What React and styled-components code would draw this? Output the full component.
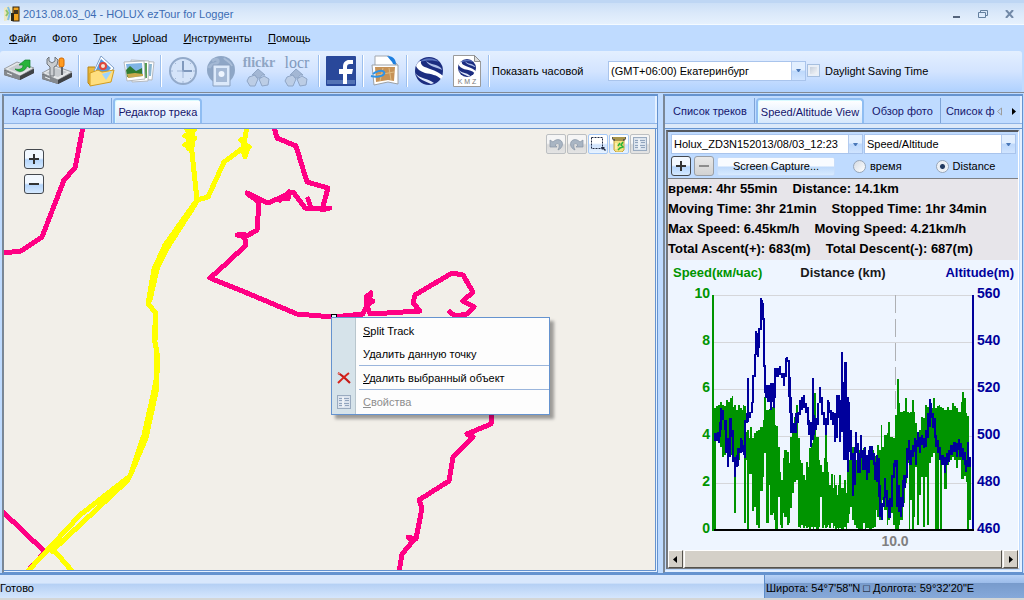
import React, { useState } from 'react';
import styled, { createGlobalStyle, css } from 'styled-components';

const GlobalStyle = createGlobalStyle`
  * {
    box-sizing: border-box;
  }
  body {
    margin: 0;
    background: #bfdbff;
    font-family: "Liberation Sans", Arial, sans-serif;
    font-size: 11px;
    line-height: 16px;
    color: #000;
  }
  button, select, input {
    font-family: inherit;
    font-size: inherit;
    line-height: inherit;
    color: inherit;
    margin: 0;
    padding: 0;
  }
  button, select {
    border: 0;
    background: none;
  }
  svg {
    display: block;
    flex: none;
  }
`;

const Window = styled.div`
  display: flex;
  flex-direction: column;
  height: 100vh;
  min-height: 480px;
  background: #bfdbff;
`;

/* title bar */

const TitleBar = styled.header`
  display: flex;
  align-items: center;
  gap: 3px;
  height: 25px;
  flex: none;
  padding: 0 5px 0 4px;
  color: #3c6cb4;
  border-top: 3px solid #bed6f4;
  border-bottom: 1px solid #f4faff;
  background: linear-gradient(#cbdff7, #dbe9fa 50%, #e6f1fd);
`;

const Title = styled.h1`
  margin: 0;
  flex: 1;
  font-size: 11px;
  font-weight: normal;
`;

const WindowButtons = styled.div`
  display: flex;
  gap: 6px;
`;

const WindowButton = styled.button`
  display: flex;
  align-items: center;
  justify-content: center;
  width: 20px;
  height: 18px;
`;

const MenuBar = styled.nav`
  display: flex;
  align-items: center;
  gap: 16px;
  height: 26px;
  flex: none;
  padding: 0 9px;
`;

const MenuLink = styled.button`
  display: block;
  white-space: nowrap;
`;

/* toolbar */

const Toolbar = styled.div`
  display: flex;
  align-items: center;
  height: 41px;
  flex: none;
  margin-right: 2px;
  padding-bottom: 2px;
  border-radius: 3px;
  background: linear-gradient(#e3efff, #d3e4ff 50%, #c4dcff 70%, #afd1fe);
`;

const ToolButton = styled.button`
  display: flex;
  align-items: center;
  justify-content: center;
  width: 38px;
  height: 38px;
  flex: none;
`;

const ToolDivider = styled.div`
  width: 2px;
  height: 32px;
  flex: none;
  margin: 0 2px;
  border-left: 1px solid #9dc0ee;
  border-right: 1px solid #fff;
`;

const ZoneLabel = styled.label`
  width: 116px;
  flex: none;
`;

const Combo = styled.span`
  display: grid;
  grid-template-columns: 1fr 14px;
  height: 20px;
  flex: ${props => props.width ? 'none' : '1'};
  width: ${props => props.width ? `${props.width}px` : 'auto'};
  min-width: 0;
  border: 1px solid #a9c4ec;
  background: #fff;

  & > select {
    grid-area: 1 / 1 / 2 / 3;
    appearance: none;
    min-width: 0;
    padding: 0 16px 0 2px;
    outline: none;
  }
`;

const ComboArrow = styled.span`
  grid-area: 1 / 2 / 2 / 3;
  display: flex;
  align-items: center;
  justify-content: center;
  pointer-events: none;
  border-left: 1px solid #b3cbef;
  background: linear-gradient(#e2efff 45%, #bdd8fb 50%, #d0e4ff);
`;

const CheckLabel = styled.label`
  display: flex;
  align-items: center;
  gap: 5px;
  margin-left: 1px;
  white-space: nowrap;
`;

const Check = styled.input`
  appearance: none;
  width: 13px;
  height: 13px;
  border: 1px solid #a6bfdf;
  background: linear-gradient(135deg, #b9c4d4, #fff);
  box-shadow: inset 0 0 0 2px #e9eff7;
`;

/* panels */

const Workspace = styled.main`
  display: flex;
  flex: 1;
  gap: 5px;
  min-height: 0;
  padding: 1px 1px 0 2px;
  border-top: 1px solid #828a94;
`;

const Panel = styled.section`
  display: flex;
  flex-direction: column;
  flex: ${props => props.side ? '0 0 360px' : '1'};
  min-width: 0;
  border: 2px solid #6593cf;
  border-left-color: #7a8796;
  border-right: 1px solid #6593cf;
  border-bottom: 1px solid #6593cf;
  padding-bottom: ${props => props.side ? '1px' : '0'};
  box-shadow: inset -2px -2px 0 #e4f0ff;
`;

const Tabs = styled.div`
  display: flex;
  align-items: flex-end;
  height: 27px;
  flex: none;
  overflow: hidden;
  padding-left: 1px;
`;

const Tab = styled.button`
  height: 25px;
  flex: none;
  padding: 0 7px;
  color: #15156c;
  white-space: nowrap;

  ${props => props.active ? css`
    margin: 0 1px;
    padding: 0 3px;
    border: 2px solid #8fbdf2;
    border-bottom: 0;
    border-radius: 4px 4px 0 0;
    background: linear-gradient(#fff, #e6f1fe 60%, #d6e7fb);
    box-shadow: inset 1px 1px 0 #d9fbff;
  ` : css`
    border-right: 1px solid #7ea3d6;
  `}

  ${props => props.last && css`
    padding-right: 0;
    padding-left: 5px;
    border-right: 0;
  `}
`;

const TabArrows = styled.div`
  display: flex;
  align-items: center;
  height: 24px;
  gap: 7px;
`;

const TabArrow = styled.button`
  display: flex;
  padding: 0 1px;
`;

const TabBand = styled.div`
  height: 6px;
  flex: none;
  border-top: 1px solid #8fb4e6;
  border-bottom: 1px solid #6593cf;
  background: #dce9f9;
`;

/* map */

const MapView = styled.div`
  position: relative;
  flex: 1;
  min-height: 0;
  margin-right: 1px;
  border-right: 1px solid #6593cf;
  border-bottom: 1px solid #6593cf;
  margin-bottom: 1px;
  overflow: hidden;
  background: #f2efe9;
`;

const TrackLayer = styled.svg`
  position: absolute;
  top: 0;
  left: 0;
`;

const MapZoom = styled.div`
  position: absolute;
  top: 20px;
  left: 20px;
  display: flex;
  flex-direction: column;
  gap: 5px;
`;

const SquareButton = styled.button`
  display: flex;
  align-items: center;
  justify-content: center;
  width: 20px;
  height: 20px;
  flex: none;
  border: 1px solid ${props => props.disabled ? '#9a9fa6' : '#44484e'};
  border-radius: 3px;
  background: ${props => props.disabled
    ? 'linear-gradient(#e8e8e8, #d2d2d2)'
    : 'linear-gradient(#f2f8ff 45%, #b5d5fb 55%, #d5e9ff)'};
`;

const MapTools = styled.div`
  position: absolute;
  top: 5px;
  right: 5px;
  display: flex;
  gap: 1px;
`;

const MapTool = styled.button`
  display: flex;
  align-items: center;
  justify-content: center;
  width: 20px;
  height: 20px;
  border: 1px solid ${props => props.lit ? '#a5c8f6' : '#bcbfc2'};
  border-radius: 2px;
  background: ${props => props.lit
    ? 'linear-gradient(#fff 45%, #cfe3fd 55%, #e8f3ff)'
    : 'linear-gradient(#f5f5f5 45%, #dadada 55%, #e4e4e4)'};
`;

const ContextMenu = styled.div`
  position: absolute;
  top: 188px;
  left: 327px;
  width: 219px;
  padding: 1px 0;
  border: 1px solid #6593cf;
  background: linear-gradient(90deg, #d6e3ea 23px, #b9c6cd 23px, #b9c6cd 24px, #fdfdfd 24px);
  box-shadow: 4px 4px 3px rgba(0, 0, 0, 0.35);
`;

const ContextItem = styled.button`
  display: grid;
  grid-template-columns: 24px 1fr;
  align-items: center;
  width: 100%;
  height: 23px;
  text-align: left;
  color: ${props => props.disabled ? '#8d8d8d' : '#000'};

  & > svg {
    margin-left: 5px;
  }
  & > span {
    grid-column: 2;
    padding-left: 7px;
  }
`;

const ContextDivider = styled.div`
  height: 1px;
  margin-left: 27px;
  background: #9ab5dc;
`;

/* speed / altitude */

const SideBody = styled.div`
  display: flex;
  flex-direction: column;
  flex: 1;
  min-height: 0;
  margin: 1px 3px 2px 1px;
  border: 2px solid #54585e;
  border-left-color: #73777d;
  border-right: 1px solid #fff;
  border-bottom: 1px solid #73777d;
`;

const Controls = styled.div`
  display: flex;
  flex-direction: column;
  gap: 2px;
  padding: 2px 2px 2px 3px;
  border-bottom: 1px solid #7d8085;
`;

const ControlRow = styled.div`
  display: flex;
  align-items: center;
  gap: ${props => props.gap}px;
`;

const CaptureButton = styled.button`
  width: 118px;
  height: 19px;
  border: 1px solid #c6dcfa;
  border-radius: 2px;
  background: linear-gradient(#f8fbff 45%, #bfdafb 55%, #d8eaff);
`;

const RadioLabel = styled.label`
  display: flex;
  align-items: center;
  gap: 4px;
  margin-left: ${props => props.offset}px;
`;

const Radio = styled.input`
  appearance: none;
  width: 13px;
  height: 13px;
  border: 1px solid #98a6b8;
  border-radius: 50%;
  background: ${props => props.checked
    ? 'radial-gradient(circle, #223a60 0 2px, #e6ebf2 3px, #fff)'
    : 'linear-gradient(135deg, #d5dbe3, #fff)'};
`;

const Stats = styled.div`
  padding: 0 0 1px;
  flex: none;
  background: #e7e5ea;
  font-size: 13px;
  font-weight: bold;
  line-height: 20px;

  & > p {
    display: flex;
    gap: 15px;
    margin: 0;
    white-space: nowrap;
  }
`;

const ChartArea = styled.div`
  display: flex;
  flex-direction: column;
  flex: 1;
  min-height: 0;
  background: #eef5ff;
`;

const ChartLegend = styled.div`
  display: flex;
  justify-content: space-between;
  padding: 3px 4px 0 5px;
  flex: none;
  font-size: 13px;
  font-weight: bold;
  line-height: 20px;
  color: #1a1a1a;
`;

const DistanceTitle = styled.span`
  flex: 1;
  padding-right: 22px;
  text-align: center;
`;

const SpeedTitle = styled.span`
  color: #009400;
`;

const AltitudeTitle = styled.span`
  color: #00009c;
`;

const Chart = styled.svg`
  flex: 1;
  width: 100%;
  min-height: 0;
  font-size: 14px;
  font-weight: bold;
`;

const ScrollBar = styled.div`
  display: flex;
  height: 18px;
  flex: none;
  gap: 1px;
  background: #eceae6;
`;

const raised = css`
  border: 1px solid #fff;
  border-right-color: #55524c;
  border-bottom-color: #55524c;
  background: #d4d0c8;
`;

const ScrollButton = styled.button`
  ${raised}
  display: flex;
  align-items: center;
  justify-content: center;
  width: 15px;
`;

const ScrollThumb = styled.div`
  ${raised}
  flex: 1;
`;

/* status */

const StatusBar = styled.footer`
  display: flex;
  height: 27px;
  flex: none;
  border-top: 2px solid #6593cf;
  border-bottom: 2px solid #d4d6d6;
  background: linear-gradient(#d8e7fc 35%, #b5d0f4 40%, #d5e6fd);
`;

const StatusText = styled.span`
  flex: 1;
  padding-top: 5px;
`;

const StatusCoords = styled.span`
  width: 260px;
  padding: 5px 0 0 1px;
  border-left: 1px solid #5d8cc8;
  background: linear-gradient(#b6d1f6, #9dbdea 33%, #789bcc 36%, #86a9da);
`;

/* icons */

const DriveBase = () => (
  <g>
    <path d="M1 19 15 12 31 18 31 22 17 29 1 24z" fill="#55585c" />
    <path d="M1 18 14 11 31 17 17 25z" fill="#e4e6e8" stroke="#9a9ea3" />
    <path d="M5 18 15 13 26 17 17 22z" fill="#c6cace" />
    <path d="M1 19v5l16 5v-4z" fill="#85898e" />
    <path d="M17 25v4l14-7v-4z" fill="#3f4246" />
    <path d="M4 22l5 2" stroke="#eef2f5" />
  </g>
);

const ImportIcon = () => (
  <svg width="32" height="32" viewBox="0 0 32 32">
    <g transform="translate(0 -4)">
      <DriveBase />
      <path d="M12 18c5 1 8 0 8-4l-4 0 6-5h5v8l-3-2c-2 6-8 7-12 3z" fill="#28b43c" stroke="#11832a" strokeWidth="0.7" />
    </g>
  </svg>
);

const SetupIcon = () => (
  <svg width="32" height="32" viewBox="0 0 32 32">
    <DriveBase />
    <path d="M8 2v4l3 2 3-2V2l3 3-1 5-3 2v9h-4v-9L6 9V4z" fill="#c9ccd0" stroke="#6f747a" />
    <rect x="18" y="3" width="5" height="9" rx="2" fill="#ff9a1f" stroke="#d46a00" />
    <path d="M20 12h2v8h-2z" fill="#5e6268" />
  </svg>
);

const FolderIcon = () => (
  <svg width="32" height="32" viewBox="0 0 32 32">
    <path d="M3 12h7l2 2v6L6 31 3 28z" fill="#e9b93e" stroke="#b98413" />
    <path d="M16 1l13 12-8 10-12-7z" fill="#fff" stroke="#7f9fc9" />
    <path d="M16 4l10 9-6 7-9-5z" fill="#5597de" />
    <circle cx="18" cy="11" r="3" fill="#f5e7d7" stroke="#e1483a" strokeWidth="2" />
    <path d="M5 18l8-3 4 2 12-2-3 12L5 31z" fill="#ffdf7f" stroke="#d29c20" />
    <path d="M17 19l10-3-6 9z" fill="#9cd3ff" />
  </svg>
);

const PhotosIcon = () => (
  <svg width="32" height="32" viewBox="0 0 32 32">
    <path d="M15 6l16 1-2 18-14-1z" fill="#fff" stroke="#b5b9be" />
    <path d="M26 9h3l-1 12h-2z" fill="#8ab6d2" />
    <path d="M8 5l18 1-1 20-16 1z" fill="#fff" stroke="#b5b9be" />
    <path d="M21 8h3v15h-3z" fill="#569c54" />
    <path d="M1 7l20-1 1 18-18 2z" fill="#fff" stroke="#b5b9be" />
    <path d="M3 9l16-1 1 13-15 2z" fill="#7fb4e4" />
    <path d="M3 15l4-4 6 5 6-3v6l-15 3z" fill="#2f7b32" />
    <path d="M4 19l8-1 8 1v2l-15 2z" fill="#c9a94d" />
  </svg>
);

const ClockIcon = () => (
  <svg width="32" height="32" viewBox="0 0 32 32">
    <circle cx="16" cy="16" r="13" fill="#d5e4f9" stroke="#93aaca" strokeWidth="2" />
    <path d="M16 6v10h9" stroke="#8099bd" strokeWidth="2" fill="none" />
    <path d="M16 26v2M4 16h2M26 16h2M8 8l1 1M24 8l-1 1M8 24l1-1M24 24l-1-1M16 16v7M10 16h6" stroke="#a3b8d7" fill="none" />
  </svg>
);

const GlobePhotoIcon = () => (
  <svg width="32" height="32" viewBox="0 0 32 32">
    <circle cx="16" cy="15" r="14" fill="#8ea6c6" />
    <path d="M7 6c5-4 8 0 5 2s-6 0-8 5" stroke="#a3b8d4" strokeWidth="3" fill="none" />
    <path d="M19 3c2 3 6 3 8 8" stroke="#a9bdd8" strokeWidth="2" fill="none" />
    <path d="M8 10h17v21H8z" fill="#dce9fa" stroke="#8ba1c0" />
    <path d="M11 13h11v14H11z" fill="#a5b9d5" />
    <circle cx="16.500" cy="19" r="3" fill="#eef5ff" />
  </svg>
);

const Gems = () => (
  <g fill="#bccde5" stroke="#90a6c6">
    <path d="M6 20l6-2 3 4-3 7-5 0-3-5z" />
    <path d="M16 22l5-3 5 3-1 6-6 1z" />
    <path d="M15 12l-6 6h3l2 3h3l2-3h3z" fill="#a3b7d4" />
  </g>
);

const FlickrIcon = () => (
  <svg width="36" height="36" viewBox="0 0 36 36">
    <text x="18" y="14" textAnchor="middle" fontFamily="'Liberation Serif', serif" fontSize="14" fontWeight="bold" fill="#8fa5c4">flickr</text>
    <g transform="translate(2 4)"><Gems /></g>
  </svg>
);

const LocrIcon = () => (
  <svg width="36" height="36" viewBox="0 0 36 36">
    <text x="18" y="15" textAnchor="middle" fontFamily="'Liberation Serif', serif" fontSize="16" fill="#8199bd">locr</text>
    <g transform="translate(2 4)"><Gems /></g>
  </svg>
);

const FacebookIcon = () => (
  <svg width="32" height="32" viewBox="0 0 32 32">
    <rect x="1" y="1" width="30" height="30" rx="1" fill="#29489a" />
    <path d="M2 25h28v4H2z" fill="#5473b5" />
    <path d="M18 29V19h-4v-5h4v-2c0-5 3-7 6-7h4v4h-3c-2 0-3 1-3 3v2h6l-1 5h-5v10z" fill="#fff" />
  </svg>
);

const MapDocIcon = () => (
  <svg width="32" height="32" viewBox="0 0 32 32">
    <path d="M6 1h14l8 8v15H6z" fill="#fff" stroke="#a2a8af" />
    <path d="M18 1c6 0 9 3 9 9l-3-1c-1-3-3-4-6-8z" fill="#1d7fe0" />
    <path d="M3 10l26 0v19l-10-2-14 3z" fill="#fff" stroke="#9ca0a5" />
    <path d="M6 12l20 0-1 14-6-1-12 2z" fill="#c79256" />
    <path d="M14 13l-3 13M20 13l2 12M8 20l17-3" stroke="#e0bd83" fill="none" />
    <path d="M2 21c8 2 15-1 13-4s-9 0-11 2" stroke="#2f93e8" strokeWidth="2" fill="none" />
  </svg>
);

const Earth = ({ r }) => (
  <g transform={`scale(${r / 14})`}>
    <circle r="14" fill="#1c2d80" />
    <path d="M-9-9C-5-14 5-14 10-9C5-11-3-11-9-9z" fill="#5a73be" />
    <path d="M-13-5C-12-8-10-10-8-10C-9-5-4-4 1-2C7 0 11 2 14 5L12 8C8 4 2 3-4 2C-9 0-12-2-13-5z" fill="#fff" />
    <path d="M-3-10C2-6 8-7 12-3L13-1C8-4 0-4-3-10z" fill="#aebfe8" />
    <path d="M-14 2C-9 8-1 7 5 12L2 13C-4 10-10 9-14 2z" fill="#dfe8fa" />
  </g>
);

const EarthIcon = () => (
  <svg width="32" height="32" viewBox="-16 -16 32 32"><Earth r={14} /></svg>
);

const KmzIcon = () => (
  <svg width="32" height="32" viewBox="0 0 32 32">
    <path d="M2.500 0.500h21l6 6v25h-27z" fill="#fff" stroke="#9a9a9a" />
    <path d="M23.500 0.500v6h6z" fill="#ddd" stroke="#8e8e8e" />
    <g transform="translate(16 13)"><Earth r={9} /></g>
    <text x="16" y="29" textAnchor="middle" fontSize="7" fill="#777">K M Z</text>
  </svg>
);

const AppIcon = () => (
  <svg width="16" height="16" viewBox="0 0 16 16">
    <path d="M0 2l5-2 4 2v13l-4-1-5 1z" fill="#ece7c0" />
    <path d="M2 4l2 3-2 3" stroke="#8fc46c" strokeWidth="2" fill="none" />
    <path d="M4 1l2 6-2 7" stroke="#7fbde6" strokeWidth="2" fill="none" />
    <rect x="9" y="1" width="6" height="14" fill="#f3a51d" stroke="#2c2010" />
    <path d="M10 4h4v4h-4z" fill="#40331e" />
    <path d="M7 7h3v8H7z" fill="#2d2718" />
  </svg>
);

const PlusMinus = ({ plus, color = '#333' }) => (
  <svg width="12" height="12" viewBox="0 0 12 12">
    <path d={plus ? 'M1 6h10M6 1v10' : 'M1 6h10'} stroke={color} strokeWidth="2" shapeRendering="crispEdges" />
  </svg>
);

const Triangle = ({ d, fill = '#000', stroke, width = 6, height = 9 }) => (
  <svg width={width} height={height} viewBox={`0 0 ${width} ${height}`}><path d={d} fill={fill} stroke={stroke} /></svg>
);

const TurnIcon = ({ flip }) => (
  <svg width="14" height="14" viewBox="0 0 14 14">
    <g transform={flip ? 'translate(14 0) scale(-1 1)' : undefined}>
      <path d="M1 3v7h7l-2-2c3-3 6-1 3 5 5-2 6-8 2-10-3-1-5 0-7 2z" fill="#a9b5c3" stroke="#8794a5" strokeWidth="0.7" />
    </g>
  </svg>
);

const SelectIcon = () => (
  <svg width="16" height="16" viewBox="0 0 16 16">
    <rect x="1.500" y="1.500" width="11" height="11" fill="none" stroke="#222c44" strokeDasharray="2 1" />
    <path d="M11 11h4l-1 1 2 2-1 1-2-2-1 1z" fill="#222c44" />
  </svg>
);

const TrackDeleteIcon = () => (
  <svg width="16" height="16" viewBox="0 0 16 16">
    <path d="M3 4h10v10l-2 2H5l-2-2z" fill="#f3df83" stroke="#c7a640" />
    <path d="M1 1h14v2l-2 2H3L1 3z" fill="#5d5a4f" />
    <path d="M2 2h12M4 4h8" stroke="#f1cf4a" fill="none" />
    <path d="M12 6l-2 3 2 2-3 1-2 2M9 7L7 10" stroke="#27b537" strokeWidth="1.500" fill="none" />
    <path d="M5 7v6" stroke="#fff6b6" strokeWidth="1.500" />
  </svg>
);

const PropsIcon = () => (
  <svg width="14" height="14" viewBox="0 0 14 14">
    <rect x="0.500" y="0.500" width="13" height="13" fill="#dce4ee" stroke="#9aabc0" />
    <path d="M2 3.500h3M7 3.500h5M2 5.500h3M8 5.500h4M2 8.500h3M7 8.500h5M2 10.500h3M8 10.500h4" stroke="#91a4bd" />
    <path d="M6 2v10" stroke="#fff" />
  </svg>
);

const DeleteIcon = () => (
  <svg width="14" height="14" viewBox="0 0 14 14">
    <path d="M1 2c4 2 8 6 12 10" stroke="#c51a17" strokeWidth="2" fill="none" />
    <path d="M12 2C8 5 5 8 1 12" stroke="#d8241c" strokeWidth="2" fill="none" />
    <path d="M1 2l2 1" stroke="#f49a8c" />
  </svg>
);

/* chart data: x, top, bottom of each column */

const speedColumns = [
  [712, 408, 530], [716, 406, 440], [718, 405, 440], [720, 402, 447], [722, 405, 457], [724, 406, 455],
  [726, 400, 440], [728, 402, 450], [730, 398, 455], [732, 396, 457], [733, 407, 460], [734, 405, 513],
  [736, 410, 460], [738, 405, 460], [740, 408, 452], [742, 410, 450], [743, 405, 455], [744, 406, 523],
  [746, 432, 460], [747, 430, 530], [749, 438, 474], [750, 427, 474], [752, 438, 511], [754, 433, 507],
  [756, 431, 525], [758, 430, 528], [760, 427, 491], [763, 420, 477], [764, 397, 453], [766, 410, 523],
  [769, 409, 485], [770, 407, 515], [773, 383, 513], [774, 408, 520], [775, 425, 529], [776, 426, 529],
  [778, 447, 497], [780, 472, 525], [781, 480, 528], [783, 458, 513], [784, 450, 517], [787, 452, 525],
  [789, 463, 523], [790, 437, 508], [792, 433, 493], [794, 417, 482], [796, 405, 480], [798, 438, 527],
  [800, 460, 528], [801, 463, 525], [803, 475, 528], [805, 480, 526], [806, 462, 528], [808, 467, 527],
  [809, 448, 529], [811, 443, 527], [813, 430, 529], [814, 393, 527], [816, 437, 529], [819, 460, 527],
  [820, 465, 497], [822, 472, 528], [824, 458, 525], [825, 433, 528], [827, 462, 527], [828, 472, 525],
  [829, 485, 528], [831, 474, 523], [833, 488, 528], [834, 475, 526], [835, 485, 529], [837, 495, 528],
  [838, 485, 529], [839, 475, 528], [841, 488, 529], [844, 480, 527], [846, 493, 529], [847, 462, 523],
  [849, 460, 514], [850, 453, 507], [852, 447, 520], [854, 452, 525], [856, 460, 528], [858, 450, 529],
  [861, 455, 529], [863, 448, 523], [865, 460, 529], [866, 470, 528], [869, 453, 529], [872, 450, 528],
  [874, 456, 527], [876, 467, 510], [877, 445, 517], [879, 450, 520], [881, 425, 513], [882, 447, 500],
  [884, 435, 510], [887, 433, 525], [888, 422, 520], [890, 437, 513], [893, 438, 525], [895, 415, 529],
  [897, 379, 529], [899, 403, 525], [900, 412, 520], [903, 411, 503], [905, 398, 483], [907, 412, 463],
  [909, 413, 529], [910, 412, 500], [912, 400, 529], [914, 412, 517], [915, 423, 467], [917, 432, 525],
  [919, 430, 495], [921, 417, 477], [923, 418, 527], [925, 405, 477], [927, 407, 525], [929, 410, 463],
  [931, 408, 457], [933, 398, 453], [935, 408, 529], [937, 406, 529], [939, 405, 450], [940, 407, 529],
  [942, 408, 460], [944, 410, 489], [947, 407, 465], [949, 410, 460], [952, 403, 457], [954, 406, 460],
  [956, 408, 468], [958, 412, 460], [961, 402, 479], [962, 392, 479], [964, 398, 476], [966, 413, 482],
  [967, 416, 529], [969, 460, 520], [971, 0, 0],
];

const altitudeColumns = [
  [714, 433, 441], [717, 432, 441], [718, 435, 443], [719, 422, 437], [720, 408, 430], [722, 410, 420],
  [724, 420, 430], [725, 420, 453], [727, 438, 467], [729, 418, 457], [730, 418, 437], [732, 430, 462],
  [734, 457, 477], [736, 455, 467], [737, 448, 466], [738, 448, 453], [740, 438, 453], [741, 440, 452],
  [743, 445, 455], [744, 420, 458], [746, 413, 423], [747, 378, 422], [749, 412, 418], [751, 402, 413],
  [752, 375, 403], [754, 354, 377], [755, 331, 355], [757, 333, 357], [758, 328, 348], [760, 298, 330],
  [761, 300, 320], [762, 303, 320], [763, 318, 367], [764, 365, 393], [765, 385, 398], [767, 385, 402],
  [770, 383, 410], [772, 383, 402], [773, 392, 408], [774, 368, 398], [776, 368, 377], [779, 366, 375],
  [781, 373, 378], [783, 373, 386], [785, 358, 377], [786, 357, 362], [788, 360, 397], [789, 377, 413],
  [790, 397, 433], [791, 413, 433], [793, 423, 433], [795, 413, 433], [797, 412, 423], [799, 400, 415],
  [801, 397, 410], [803, 395, 408], [805, 403, 413], [807, 407, 425], [808, 420, 435], [810, 422, 447],
  [812, 378, 440], [813, 415, 435], [815, 418, 430], [817, 403, 425], [819, 387, 403], [821, 397, 415],
  [823, 412, 425], [825, 418, 435], [827, 400, 425], [828, 402, 413], [830, 410, 420], [832, 412, 425],
  [834, 413, 442], [836, 395, 438], [838, 395, 418], [839, 400, 442], [841, 352, 432], [843, 382, 460],
  [844, 362, 460], [847, 397, 472], [848, 402, 452], [850, 430, 460], [852, 453, 496], [854, 447, 485],
  [855, 432, 453], [857, 443, 473], [859, 453, 473], [860, 435, 458], [862, 450, 470], [864, 447, 470],
  [866, 455, 480], [868, 450, 473], [869, 446, 460], [873, 453, 465], [874, 462, 480], [876, 455, 482],
  [878, 458, 497], [879, 485, 517], [881, 503, 520], [883, 497, 507], [884, 478, 498], [886, 490, 507],
  [888, 500, 518], [889, 498, 518], [891, 475, 507], [893, 463, 478], [894, 460, 467], [896, 460, 507],
  [898, 485, 512], [900, 497, 517], [902, 480, 507], [903, 475, 488], [906, 448, 478], [908, 440, 460],
  [909, 450, 465], [912, 445, 457], [914, 438, 452], [915, 440, 465], [917, 432, 447], [919, 437, 453],
  [921, 435, 445], [923, 438, 448], [925, 430, 447], [927, 413, 438], [929, 399, 427], [930, 403, 418],
  [932, 413, 428], [934, 418, 438], [935, 435, 447], [937, 440, 453], [939, 447, 460], [941, 455, 465],
  [944, 457, 473], [946, 453, 465], [948, 450, 462], [950, 445, 455], [953, 442, 452], [956, 443, 457],
  [958, 439, 450], [959, 443, 457], [962, 448, 460], [964, 452, 465], [965, 460, 472], [967, 442, 467],
  [969, 457, 467], [971, 0, 0],
];

const columnsPath = (columns) => columns.slice(0, -1).map(([x, top, bottom], i) => (
  `M${x} ${top}H${columns[i + 1][0]}V${bottom}H${x}z`
)).join('');

// every sample is at least two pixels wide, like a pen of that width
const penPath = (columns) => columns.slice(0, -1).map(([x, top, bottom], i) => (
  `M${x} ${top}H${Math.max(columns[i + 1][0], x + 2)}V${bottom}H${x}z`
)).join('');

const grid = [295, 342, 389, 436, 483];
const speedTicks = [10, 8, 6, 4, 2, 0];
const altitudeTicks = [560, 540, 520, 500, 480, 460];

const SpeedChart = () => (
  <Chart viewBox="668 283 350 266" preserveAspectRatio="xMidYMin meet" role="img" aria-label="Speed/Altitude">
    <g shapeRendering="crispEdges">
      {grid.map(y => <path key={y} d={`M714 ${y}h258v1h-258z`} fill="#d5d6da" />)}
      <path d="M895.500 295V530" stroke="#aeb0b4" strokeDasharray="18 6" />
      <path d={columnsPath(speedColumns)} fill="#009400" />
      <path d={penPath(altitudeColumns)} fill="#00009c" />
      <path d="M712 295h2v236h-2z" fill="#009400" />
      <path d="M972 295h2v235h-2z" fill="#00009c" />
      <path d="M714 529h260v2h-260z" />
    </g>
    {speedTicks.map((tick, i) => (
      <text key={tick} x="710" y={298 + i * 47} textAnchor="end" fill="#009400">{tick}</text>
    ))}
    {altitudeTicks.map((tick, i) => (
      <text key={tick} x="977" y={298 + i * 47} fill="#00009c">{tick}</text>
    ))}
    <text x="895" y="546" textAnchor="middle" fill="#808080">10.0</text>
  </Chart>
);

const Tracks = () => (
  <TrackLayer width="651" height="441" viewBox="4 129 651 441" shapeRendering="crispEdges" aria-hidden="true">
    <g fill="none" stroke="#ff0084" strokeWidth="5" strokeLinejoin="round" strokeLinecap="round">
      <path d="M83 127 78 153 75 168 64 180 42 237 21 251 3 253" />
      <path d="M274 127 277 138 296 146 307 182 328 188 322 210 330 208 305 208 293 192 268 203 247 193 259 202 257 230 245 237 237 235 244 234 246 245 228 262 210 278 247 293 297 314 333 317 363 314 367 305 366 297 371 293 369 300 373 301 367 305 370 314 420 311 413 303 415 295 452 273 463 275 473 292 463 301 474 307 467 314 455 316 450 312" />
      <path d="M308 199 311 208M280 200 289 192 288 199 281 198M250 196 260 200" />
      <path d="M491 405V424L467 434 473 437 453 457 449 481 419 500 422 508 416 539 408 537 413 541 402 554 399 572" />
      <path d="M2 511 45 552 26 573" />
    </g>
    <g fill="none" stroke="#ff0" strokeWidth="5" strokeLinejoin="round" strokeLinecap="round">
      <path d="M187 130 195 129 185 136 195 138 185 145 190 147 192 152 197 200 165 245 154 269 148 304 156 313 154 337 157 353 156 380 153 395 144 435 130 476 80 515 28 571" />
      <path d="M190 130V147" strokeWidth="9" />
      <path d="M196 203 166 250 157 269 150 300M155 313V340M158 355 156 392 146 438 130 476 127 481 52 551M52 548 72 571" />
      <path d="M197 200 208 197 224 162 243 148 247 127M241 140 248 147 245 157 243 151 249 147" />
    </g>
    <path d="M331.500 314.500h5v4h-5z" fill="#dff3ff" stroke="#000" />
  </TrackLayer>
);

const Picker = ({ id, label, value, width }) => (
  <Combo width={width}>
    <select id={id} aria-label={label} defaultValue={value}>
      <option>{value}</option>
    </select>
    <ComboArrow>
      <Triangle d="M0 0h5L3 3H2z" width={5} height={3} fill="#4a78b8" />
    </ComboArrow>
  </Combo>
);

const SidePanel = () => {
  const [axis, setAxis] = useState('distance');

  return (
    <Panel side="true">
      <Tabs role="tablist">
        <Tab role="tab">Список треков</Tab>
        <Tab role="tab" active="true" aria-selected="true">Speed/Altitude View</Tab>
        <Tab role="tab">Обзор фото</Tab>
        <Tab role="tab" last="true">Список ф</Tab>
        <TabArrows>
          <TabArrow aria-label="Previous tabs"><Triangle d="M5.500 1v7L1.500 4.500z" fill="none" stroke="#9c9c9c" /></TabArrow>
          <TabArrow aria-label="Next tabs"><Triangle d="M1 1v7l4-3.500z" /></TabArrow>
        </TabArrows>
      </Tabs>
      <TabBand />
      <SideBody>
        <Controls>
          <ControlRow gap={1}>
            <Picker label="Track" value="Holux_ZD3N152013/08/03_12:23" width={192} />
            <Picker label="Chart" value="Speed/Altitude" />
          </ControlRow>
          <ControlRow gap={3}>
            <SquareButton aria-label="Zoom in chart"><PlusMinus plus /></SquareButton>
            <SquareButton aria-label="Zoom out chart" disabled><PlusMinus color="#8c8c8c" /></SquareButton>
            <CaptureButton>Screen Capture...</CaptureButton>
            <RadioLabel offset={15}>
              <Radio type="radio" name="axis" checked={axis === 'time'} onChange={() => setAxis('time')} />
              время
            </RadioLabel>
            <RadioLabel offset={31}>
              <Radio type="radio" name="axis" checked={axis === 'distance'} onChange={() => setAxis('distance')} />
              Distance
            </RadioLabel>
          </ControlRow>
        </Controls>
        <Stats>
          <p><span>время: 4hr 55min</span><span>Distance: 14.1km</span></p>
          <p><span>Moving Time: 3hr 21min</span><span>Stopped Time: 1hr 34min</span></p>
          <p><span>Max Speed: 6.45km/h</span><span>Moving Speed: 4.21km/h</span></p>
          <p><span>Total Ascent(+): 683(m)</span><span>Total Descent(-): 687(m)</span></p>
        </Stats>
        <ChartArea>
          <ChartLegend>
            <SpeedTitle>Speed(км/час)</SpeedTitle>
            <DistanceTitle>Distance (km)</DistanceTitle>
            <AltitudeTitle>Altitude(m)</AltitudeTitle>
          </ChartLegend>
          <SpeedChart />
        </ChartArea>
        <ScrollBar>
          <ScrollButton aria-label="Scroll left"><Triangle d="M4 1v7L0 4.500z" width={5} /></ScrollButton>
          <ScrollThumb />
          <ScrollButton aria-label="Scroll right"><Triangle d="M1 1v7l4-3.500z" width={5} /></ScrollButton>
        </ScrollBar>
      </SideBody>
    </Panel>
  );
};

const MapPanel = () => (
  <Panel>
    <Tabs role="tablist">
      <Tab role="tab">Карта Google Map</Tab>
      <Tab role="tab" active="true" aria-selected="true">Редактор трека</Tab>
    </Tabs>
    <TabBand />
    <MapView>
      <Tracks />
      <MapZoom>
        <SquareButton aria-label="Zoom in"><PlusMinus plus /></SquareButton>
        <SquareButton aria-label="Zoom out"><PlusMinus /></SquareButton>
      </MapZoom>
      <MapTools>
        <MapTool aria-label="Undo"><TurnIcon /></MapTool>
        <MapTool aria-label="Redo"><TurnIcon flip /></MapTool>
        <MapTool aria-label="Select" lit="true"><SelectIcon /></MapTool>
        <MapTool aria-label="Delete points" lit="true"><TrackDeleteIcon /></MapTool>
        <MapTool aria-label="Properties"><PropsIcon /></MapTool>
      </MapTools>
      <ContextMenu role="menu">
        <ContextItem role="menuitem"><span><u>S</u>plit Track</span></ContextItem>
        <ContextItem role="menuitem"><span>Удалить данную точку</span></ContextItem>
        <ContextDivider />
        <ContextItem role="menuitem"><DeleteIcon /><span><u>У</u>далить выбранный объект</span></ContextItem>
        <ContextDivider />
        <ContextItem role="menuitem" disabled><PropsIcon /><span><u>С</u>войства</span></ContextItem>
      </ContextMenu>
    </MapView>
  </Panel>
);

const App = () => (
  <>
    <GlobalStyle />
    <Window>
      <TitleBar>
        <AppIcon />
        <Title>2013.08.03_04 - HOLUX ezTour for Logger</Title>
        <WindowButtons>
          <WindowButton aria-label="Minimize">
            <svg width="8" height="8" viewBox="0 0 8 8"><path d="M0 6h7v2H0z" fill="#54647c" /></svg>
          </WindowButton>
          <WindowButton aria-label="Restore">
            <svg width="10" height="8" viewBox="0 0 10 8">
              <path d="M2.500 2.500v-2h7v5h-2M0.500 2.500h7v5h-7z" fill="none" stroke="#64809f" />
            </svg>
          </WindowButton>
          <WindowButton aria-label="Close">
            <svg width="9" height="8" viewBox="0 0 9 8"><path d="M1 0l7 8M8 0L1 8" stroke="#7289a7" strokeWidth="2" /></svg>
          </WindowButton>
        </WindowButtons>
      </TitleBar>
      <MenuBar>
        <MenuLink><u>Ф</u>айл</MenuLink>
        <MenuLink>Фото</MenuLink>
        <MenuLink><u>Т</u>рек</MenuLink>
        <MenuLink><u>U</u>pload</MenuLink>
        <MenuLink><u>И</u>нструменты</MenuLink>
        <MenuLink><u>П</u>омощь</MenuLink>
      </MenuBar>
      <Toolbar>
        <ToolButton aria-label="Import"><ImportIcon /></ToolButton>
        <ToolButton aria-label="Device setup"><SetupIcon /></ToolButton>
        <ToolDivider />
        <ToolButton aria-label="Open"><FolderIcon /></ToolButton>
        <ToolButton aria-label="Photos"><PhotosIcon /></ToolButton>
        <ToolDivider />
        <ToolButton aria-label="Time"><ClockIcon /></ToolButton>
        <ToolButton aria-label="Geotag"><GlobePhotoIcon /></ToolButton>
        <ToolButton><FlickrIcon /></ToolButton>
        <ToolButton><LocrIcon /></ToolButton>
        <ToolDivider />
        <ToolButton aria-label="Facebook"><FacebookIcon /></ToolButton>
        <ToolDivider />
        <ToolButton aria-label="Map"><MapDocIcon /></ToolButton>
        <ToolDivider />
        <ToolButton aria-label="Google Earth"><EarthIcon /></ToolButton>
        <ToolButton><KmzIcon /></ToolButton>
        <ToolDivider />
        <ZoneLabel htmlFor="zone">Показать часовой</ZoneLabel>
        <Picker id="zone" value="(GMT+06:00) Екатеринбург" width={198} />
        <CheckLabel>
          <Check type="checkbox" />
          Daylight Saving Time
        </CheckLabel>
      </Toolbar>
      <Workspace>
        <MapPanel />
        <SidePanel />
      </Workspace>
      <StatusBar>
        <StatusText>Готово</StatusText>
        <StatusCoords>Широта: 54°7'58"N □ Долгота: 59°32'20"E</StatusCoords>
      </StatusBar>
    </Window>
  </>
);

export default App;
